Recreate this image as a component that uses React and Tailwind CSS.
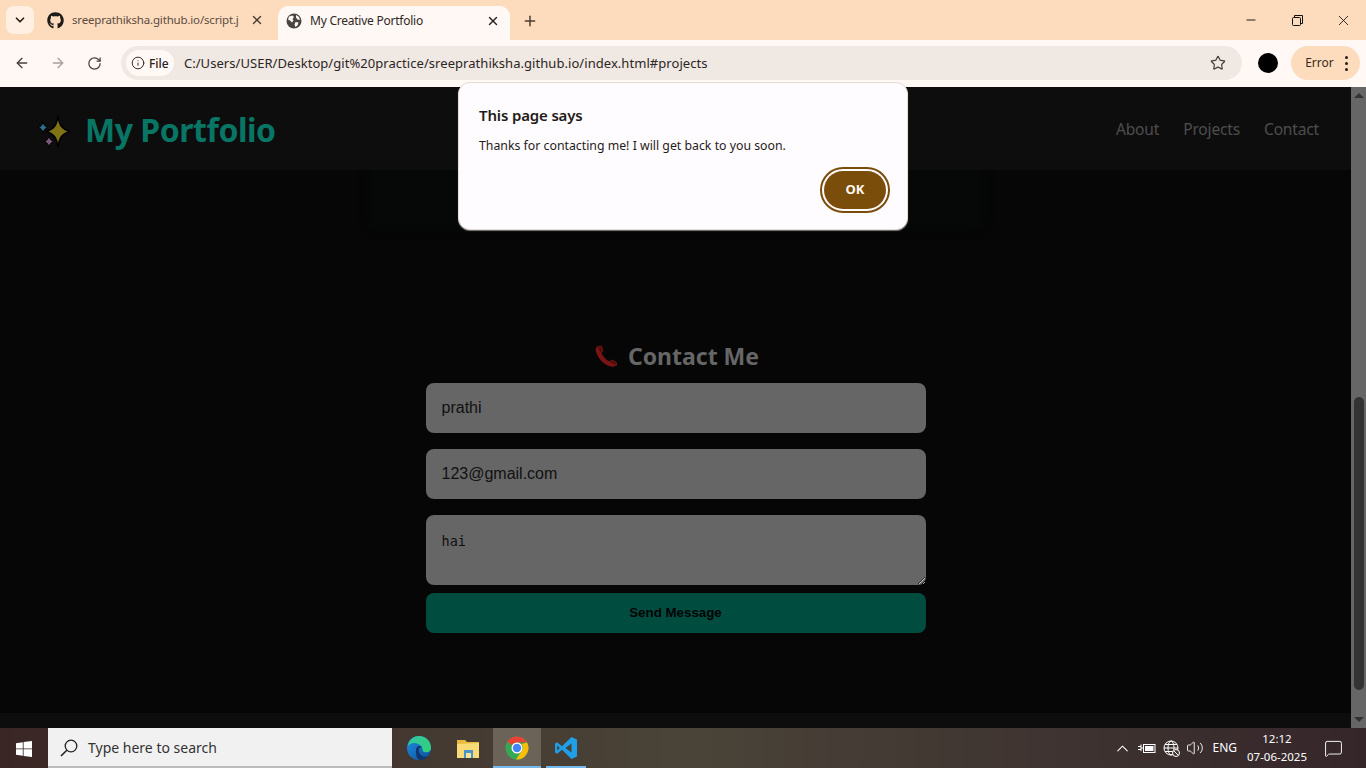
import React from 'react';
import { ArrowLeft, ArrowRight, RotateCw, Info, Star, X, Plus, ChevronDown, Minus, ChevronUp, MessageSquare, Volume2 } from 'lucide-react';
import { FaGithub } from 'react-icons/fa';

const uiFont = 'font-["Noto_Sans","Open_Sans",sans-serif]';

function GlobeIcon() {
  return (
    <svg width="16" height="16" viewBox="0 0 16 16">
      <circle cx="8" cy="8" r="7.5" fill="#4a4442" />
      <path d="M3 3.5 L6.5 2.5 L8 4 L6.5 6 L7.5 7.5 L6 9.5 L4 7.5 L2 6.5Z M9.5 9 L12.5 9.5 L11.5 12.5 L9.5 14 L8.5 11.5Z M10 2 L13 4 L14 7 L11.5 6.5 L10 4.5Z" fill="#fff8f4" />
    </svg>
  );
}

function Sparkles() {
  return (
    <svg width="36" height="40" viewBox="0 0 36 40">
      <path d="M22 6.5 C23 16 26 20.5 34 22.5 C26 24.5 23 29 22 38.5 C21 29 18 24.5 10 22.5 C18 20.5 21 16 22 6.5Z" fill="#7f7316" stroke="#000" strokeWidth="1.5" />
      <path d="M7 12.5 C7.5 16 9 17.5 12 18.5 C9 19.5 7.5 21 7 24.5 C6.5 21 5 19.5 2 18.5 C5 17.5 6.5 16 7 12.5Z" fill="#2f6f85" stroke="#000" strokeWidth="1" />
      <path d="M13 26.5 C13.5 30 15 31.5 18 32.5 C15 33.5 13.5 35 13 38.5 C12.5 35 11 33.5 8 32.5 C11 31.5 12.5 30 13 26.5Z" fill="#7a5a78" stroke="#000" strokeWidth="1" />
    </svg>
  );
}

function PhoneEmoji() {
  return (
    <svg width="24" height="24" viewBox="0 0 24 24">
      <path d="M4 2 C2 3 1 5 2 8 C4 14 9 20 15 22 C18 23 21 23 23 21 L23 18.5 L18 15.5 L15.5 17.5 C12 16 9 12 7.5 9 L9.5 7 L7.5 1.5Z" fill="#7a1414" />
      <path d="M4 3 L6.5 2 L8.5 7 L6.5 8.5Z M16 18 L18 16.5 L22.5 19 L21.5 21Z" fill="#4e0c0c" />
    </svg>
  );
}

function EdgeIcon() {
  return (
    <svg width="26" height="26" viewBox="0 0 26 26">
      <defs>
        <linearGradient id="edge-a" x1="0" y1="0" x2="1" y2="1">
          <stop offset="0" stopColor="#34c6a0" />
          <stop offset="1" stopColor="#2fd07a" />
        </linearGradient>
        <linearGradient id="edge-b" x1="0" y1="0" x2="1" y2="1">
          <stop offset="0" stopColor="#1f8fe0" />
          <stop offset="1" stopColor="#0c4f9e" />
        </linearGradient>
      </defs>
      <circle cx="13" cy="13" r="12" fill="url(#edge-b)" />
      <path d="M2 11 C3 4 8 1 13 1 C20 1 25 6 25 13 C25 17 21 18 18 17 C16 16 17 13 15 11 C11 7 5 7 2 11Z" fill="url(#edge-a)" />
      <path d="M10 15 C10 11 14 10 16 12 C13 12 12 15 13.5 18 C15 21 19 23 22 21 C19 25 14 26 12 24 C10 22 10 18 10 15Z" fill="#12356e" />
    </svg>
  );
}

function FolderIcon() {
  return (
    <svg width="24" height="22" viewBox="0 0 24 22">
      <path d="M1 3 L9 3 L11 5 L23 5 L23 21 L1 21Z" fill="#e8b93e" />
      <path d="M1 7 L23 6 L23 21 L1 21Z" fill="#f8db76" />
      <rect x="8" y="13" width="9" height="8" fill="#4a93c8" />
      <rect x="10" y="16" width="5" height="5" fill="#f5e3a0" />
    </svg>
  );
}

function ChromeIcon() {
  return (
    <svg width="24" height="24" viewBox="0 0 24 24">
      <circle cx="12" cy="12" r="11.5" fill="#34a853" />
      <path d="M12 .5 A11.5 11.5 0 0 1 22 6.5 L12 6.5 A5.5 5.5 0 0 0 7 9.5 L2.5 5.5 A11.5 11.5 0 0 1 12 .5Z" fill="#ea4335" />
      <path d="M22 6.5 A11.5 11.5 0 0 1 11 23.5 L16.5 15 A5.5 5.5 0 0 0 16.5 8Z" fill="#fbbc05" />
      <circle cx="12" cy="12" r="5.5" fill="#fff" />
      <circle cx="12" cy="12" r="4.2" fill="#4285f4" />
    </svg>
  );
}

function VsCodeIcon() {
  return (
    <svg width="24" height="24" viewBox="0 0 24 24">
      <path d="M17.5 1 L23 3.5 L23 20.5 L17.5 23 L8 13.8 L3 17.7 L1 16.6 L1 7.4 L3 6.3 L8 10.2Z M17.5 7.5 L11.5 12 L17.5 16.5Z M3.2 9.5 L3.2 14.5 L5.8 12Z" fill="#1f9fe8" fillRule="evenodd" />
    </svg>
  );
}

function WinLogo() {
  return (
    <svg width="16" height="16" viewBox="0 0 16 16" fill="#fff">
      <path d="M0 2.2 L6.8 1.2 L6.8 7.5 L0 7.5Z M7.6 1.1 L16 0 L16 7.5 L7.6 7.5Z M0 8.3 L6.8 8.3 L6.8 14.7 L0 13.8Z M7.6 8.3 L16 8.3 L16 16 L7.6 14.9Z" />
    </svg>
  );
}

function SearchGlass() {
  return (
    <svg width="18" height="18" viewBox="0 0 18 18" fill="none" stroke="#222" strokeWidth="1.3">
      <circle cx="11" cy="7" r="5.8" />
      <path d="M6.8 11.2 L1 17" strokeWidth="1.6" />
    </svg>
  );
}

function BatteryIcon() {
  return (
    <svg width="18" height="14" viewBox="0 0 18 14" fill="none" stroke="#fff">
      <rect x="5.5" y="3.5" width="11.5" height="8" />
      <rect x="7" y="5" width="8.5" height="5" fill="#fff" stroke="none" />
      <path d="M0 5.5 H3 M0 8.5 H3 M3 3.5 V10 M3 7 H5.5" />
    </svg>
  );
}

function NetIcon() {
  return (
    <svg width="17" height="17" viewBox="0 0 17 17" fill="none" stroke="#fff" strokeWidth="1">
      <circle cx="8" cy="8" r="7" />
      <ellipse cx="8" cy="8" rx="3" ry="7" />
      <path d="M1 8 H15 M2 4.5 H14 M2 11.5 H14" />
      <circle cx="13" cy="13" r="3.5" fill="#3e3830" />
      <path d="M11 11 L15 15" />
    </svg>
  );
}

function Tabs() {
  return (
    <div className="h-10 bg-[#fddcbd] flex items-end shrink-0">
      <div className="w-7 h-7 ml-[6px] mb-[6px] rounded-lg bg-[#fff0e3] flex items-center justify-center">
        <ChevronDown size={14} strokeWidth={3} color="#2b211b" />
      </div>
      <div className="w-[239px] h-8 ml-[13px] flex items-center mb-[4px]">
        <FaGithub size={17} color="#1d1a18" />
        <span className="ml-2 w-[166px] whitespace-nowrap text-[11.5px] tracking-[-0.015em] text-[#5c4b40]">sreeprathiksha.github.io/script.j</span>
        <X size={14} strokeWidth={2.4} color="#4a3c33" className="ml-[12px]" />
      </div>
      <div className="w-[232px] h-[34px] -ml-[8px] bg-[#fff8f4] rounded-t-[10px] flex items-center pl-2 pb-[5px]">
        <GlobeIcon />
        <span className="ml-2 w-[176px] text-xs tracking-[-0.02em] text-[#2f2823]">My Creative Portfolio</span>
        <X size={14} strokeWidth={2.4} color="#2b211b" />
      </div>
      <div className="w-10 h-[34px] flex items-center justify-center pb-[5px]">
        <Plus size={16} strokeWidth={2.2} color="#4a3c33" />
      </div>
      <div className="flex-1" />
      <div className="flex h-10 items-center">
        <div className="w-[46px] flex justify-center"><Minus size={14} strokeWidth={1.6} color="#111" /></div>
        <div className="w-[46px] flex justify-center">
          <svg width="11" height="11" viewBox="0 0 11 11" fill="none" stroke="#111"><rect x=".5" y="2.5" width="8" height="8" rx="1" /><path d="M2.5 2.5 V.5 H10.5 V8.5 H8.5" /></svg>
        </div>
        <div className="w-[46px] flex justify-center"><X size={17} strokeWidth={1.2} color="#111" /></div>
      </div>
    </div>
  );
}

function Toolbar() {
  return (
    <div className="h-[47px] bg-[#fff8f4] flex items-center shrink-0 pl-[14px] pr-[6px] pb-[1px]">
      <ArrowLeft size={16} strokeWidth={2} color="#4a3f38" />
      <ArrowRight size={16} strokeWidth={2} color="#a89f98" className="ml-5" />
      <RotateCw size={15} strokeWidth={2} color="#4a3f38" className="ml-[21px]" />
      <div className="ml-[19px] w-[1124px] h-[34px] rounded-full bg-[#f0e8e3] flex items-center pl-[5px]">
        <div className="h-[26px] w-[48px] rounded-full bg-[#fff8f4] flex items-center pl-[5px]">
          <Info size={14} strokeWidth={1.6} color="#2b211b" />
          <span className="ml-1 pt-[1px] text-xs font-medium text-[#2b211b]">File</span>
        </div>
        <span className="ml-[10px] pt-[1px] text-[13px] text-[#2b2623] tracking-[0.004em]">C:/Users/USER/Desktop/git%20practice/sreeprathiksha.github.io/index.html#projects</span>
        <div className="flex-1" />
        <Star size={16} strokeWidth={1.8} color="#4a3f38" className="mr-4" />
      </div>
      <div className="w-5 h-5 rounded-full bg-black ml-4" />
      <div className="ml-[13px] w-[69px] h-[34px] rounded-full bg-[#fddcbd] flex items-center pl-[14px]">
        <span className="text-xs text-[#3a2a20]">Error</span>
        <div className="ml-[11px] flex flex-col gap-[3px]">
          <div className="w-[3px] h-[3px] rounded-full bg-[#2b1c12]" />
          <div className="w-[3px] h-[3px] rounded-full bg-[#2b1c12]" />
          <div className="w-[3px] h-[3px] rounded-full bg-[#2b1c12]" />
        </div>
      </div>
    </div>
  );
}

function Page() {
  return (
    <div className="flex-1 min-h-0 flex bg-[#060606]">
      <div className="flex-1 flex flex-col min-w-0 overflow-hidden">
        <header className="h-[83px] shrink-0 bg-[#0d0d0e] flex items-center justify-between pl-[36px] pr-[32px] relative z-10">
          <div className="flex items-center">
            <Sparkles />
            <span className="ml-[13px] pt-[2px] text-[32px] font-bold tracking-[-0.015em] text-[#087565] leading-none">My Portfolio</span>
          </div>
          <nav className="flex gap-6 pt-[2px] text-[15.5px] tracking-[-0.01em] text-[#4d4d4d]">
            <span>About</span>
            <span>Projects</span>
            <span>Contact</span>
          </nav>
        </header>
        <div className="mx-auto w-[606px] h-[55px] shrink-0 bg-[#060808] shadow-[0_0_10px_#060a0a]" />
        <section className="w-[500px] mx-auto mt-[116px]">
          <h2 className="h-[32px] -mt-[1px] pl-[2px] flex items-center justify-center text-[23px] font-bold text-[#666666] leading-none">
            <PhoneEmoji />
            <span className="ml-[10px]">Contact Me</span>
          </h2>
          <div className={'mt-[11px] flex flex-col font-["Liberation_Sans",Arial,sans-serif]'}>
            <input readOnly value="prathi" className="h-[50px] w-full rounded-lg bg-[#666666] px-4 text-base text-[#111111] outline-none" />
            <input readOnly value="123@gmail.com" className="mt-4 h-[50px] w-full rounded-lg bg-[#666666] px-4 text-base text-[#111111] outline-none" />
            <textarea readOnly value="hai" className='mt-4 h-[70px] w-full rounded-lg bg-[#666666] px-4 pt-[19px] block font-["DejaVu_Sans_Mono","Liberation_Mono",monospace] text-[13.5px] leading-[15px] text-[#111111] outline-none' />
            <button className="mt-2 h-10 w-full rounded-lg bg-[#004d40] text-[13.33px] font-bold text-[#030303]">Send Message</button>
          </div>
        </section>
        <footer className="mt-auto h-[15px] shrink-0 bg-[#0d0d0e]" />
      </div>
      <div className="w-[15px] shrink-0 bg-[#666666] flex flex-col items-center">
        <div className="w-0 h-0 mt-[6px] border-x-[5px] border-x-transparent border-b-[5px] border-b-[#333333]" />
        <div className="mt-[299px] w-[10px] h-[293px] rounded-full bg-[#333333]" />
        <div className="flex-1" />
        <div className="w-0 h-0 mb-[6px] border-x-[5px] border-x-transparent border-t-[5px] border-t-[#333333]" />
      </div>
    </div>
  );
}

function AlertDialog() {
  return (
    <div className="absolute z-20 left-[458px] top-[82px] w-[450px] h-[148px] rounded-xl bg-[#fffcff] border border-[#e6dcd6] shadow-[0_1px_1px_rgba(150,150,150,0.8)]">
      <div className="pl-5 pt-[22px] text-[15px] font-semibold tracking-[-0.01em] leading-5 text-[#1f1b18]">This page says</div>
      <div className="pl-5 pt-[12px] text-[12.3px] leading-[18px] text-[#1f1b18]">Thanks for contacting me! I will get back to you soon.</div>
      <div className="absolute right-[17px] top-[84px] w-[70px] h-[46px] rounded-full border-2 border-[#7a4d0b] p-[2px]">
        <div className="w-full h-full rounded-full bg-[#7a4d0b] flex items-center justify-center text-[13px] font-bold text-[#fff8f0]">OK</div>
      </div>
    </div>
  );
}

function Taskbar() {
  return (
    <div className="h-10 shrink-0 flex items-stretch bg-gradient-to-r from-[#3a2725] via-[#4a4438] to-[#35262a] text-white">
      <div className="w-[48px] flex items-center justify-center pt-[1px]"><WinLogo /></div>
      <div className="w-[344px] bg-[#f1f1f1] border-b-2 border-[#bcbcbc] flex items-center pl-[12px] pt-[1px]">
        <SearchGlass />
        <span className="ml-[10px] pt-[1px] text-sm text-[#333]">Type here to search</span>
      </div>
      <div className="w-[50px] ml-[2px] flex items-center justify-center"><EdgeIcon /></div>
      <div className="w-[46px] ml-[1px] flex items-center justify-center"><FolderIcon /></div>
      <div className="w-[48px] ml-[2px] pt-[2px] bg-[#6b6258] border-b-2 border-[#76b9ed] flex items-center justify-center"><ChromeIcon /></div>
      <div className="w-10 ml-[5px] pt-[2px] border-b-2 border-[#76b9ed] flex items-center justify-center"><VsCodeIcon /></div>
      <div className="flex-1" />
      <div className="flex items-center pr-[13px]">
        <ChevronUp size={19} strokeWidth={1.3} />
        <div className="ml-[6px]"><BatteryIcon /></div>
        <div className="ml-[7px]"><NetIcon /></div>
        <div className="ml-[6px]"><Volume2 size={18} strokeWidth={1.2} /></div>
        <span className="ml-[8px] text-xs">ENG</span>
        <div className="ml-[7px] w-[66px] text-center text-[11.5px] leading-[18px]">
          <div>12:12</div>
          <div>07-06-2025</div>
        </div>
        <div className="ml-[14px] w-[29px]"><MessageSquare size={19} strokeWidth={1.2} /></div>
      </div>
    </div>
  );
}

function App() {
  return (
    <div className={`relative w-[1366px] h-[768px] flex flex-col overflow-hidden ${uiFont}`}>
      <Tabs />
      <Toolbar />
      <Page />
      <Taskbar />
      <AlertDialog />
    </div>
  );
}

export default App;
